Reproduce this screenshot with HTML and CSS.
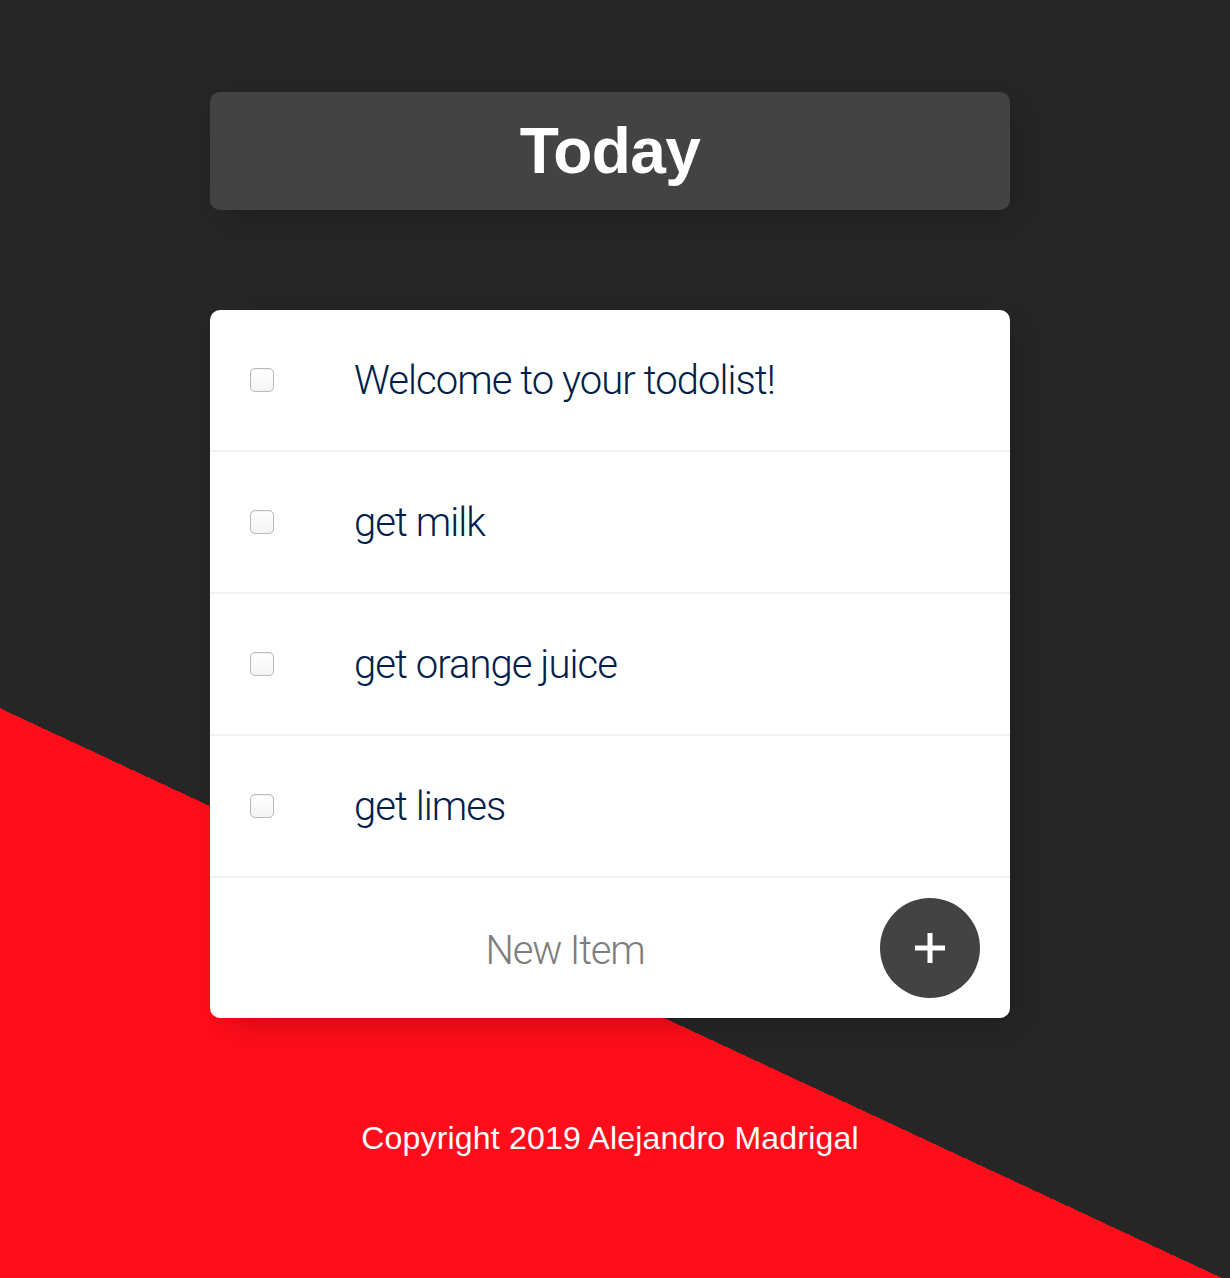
FILE: index.html
```html
<!DOCTYPE html>
<html lang="en">
<head>
<meta charset="utf-8">
<title>Today</title>
<link rel="stylesheet" href="styles.css">
</head>
<body>
<main class="page">
  <div class="box heading">
    <h1 class="title">Today</h1>
  </div>
  <div class="box list">
    <div class="item">
      <input type="checkbox" class="check">
      <p class="item-text">Welcome to your todolist!</p>
    </div>
    <div class="item">
      <input type="checkbox" class="check">
      <p class="item-text">get milk</p>
    </div>
    <div class="item">
      <input type="checkbox" class="check">
      <p class="item-text">get orange juice</p>
    </div>
    <div class="item">
      <input type="checkbox" class="check">
      <p class="item-text">get limes</p>
    </div>
    <form class="item new-item">
      <input type="text" class="new-input" placeholder="New Item" autocomplete="off">
      <button type="button" class="add-btn" aria-label="Add">
        <svg width="30" height="30" viewBox="0 0 30 30"><rect x="12.5" y="0" width="5" height="30" fill="#fff"/><rect x="0" y="12.5" width="30" height="5" fill="#fff"/></svg>
      </button>
    </form>
  </div>
  <footer class="footer">Copyright 2019 Alejandro Madrigal</footer>
</main>
</body>
</html>
```
FILE: styles.css
```css
html {
  background: linear-gradient(25deg, #ff0d1a 50%, #262626 50%) 0 0 / 1230px 1990px no-repeat, #262626;
  font-family: "Liberation Sans", Arial, sans-serif;
}

body {
  margin: 0;
}

.page {
  padding: 92px 10px 0 0;
  display: flex;
  flex-direction: column;
  align-items: center;
}

.box {
  width: 800px;
  border-radius: 10px;
  box-shadow: 10px 10px 30px -10px rgba(0, 0, 0, 0.3);
}

.heading {
  background: #434343;
  text-align: center;
  padding: 20px 0;
}

.title {
  margin: 0;
  font-size: 64px;
  line-height: 78px;
  font-weight: 700;
  color: #fff;
  letter-spacing: -0.6px;
}

.list {
  margin-top: 100px;
  background: #fff;
}

.item {
  min-height: 140px;
  display: flex;
  align-items: center;
  border-bottom: 2px solid #f1f1f1;
}

.item:last-child {
  border-bottom: 0;
}

.check {
  appearance: none;
  -webkit-appearance: none;
  margin: 0 40px;
  width: 24px;
  height: 24px;
  box-sizing: border-box;
  border: 1px solid #b9b9b9;
  border-radius: 5px;
  background: linear-gradient(#ffffff, #f4f4f4);
  box-shadow: inset 0 1px 1px rgba(0,0,0,0.05);
  flex: none;
}

.item-text {
  margin: 0;
  padding: 40px;
  font-family: Roboto, "Liberation Sans", sans-serif;
  font-size: 40px;
  font-weight: 300;
  letter-spacing: -0.95px;
  color: #00204a;
}

.new-item {
  margin: 0 0 0 40px;
}

.new-input {
  box-sizing: border-box;
  width: 630px;
  height: 120px;
  border: none;
  background: transparent;
  text-align: center;
  font-family: Roboto, "Liberation Sans", sans-serif;
  font-size: 40px;
  font-weight: 300;
  letter-spacing: -1.2px;
  color: #00204a;
  outline: none;
  padding: 4px 0 0;
}

.new-input::placeholder {
  color: #7d7d7d;
}

.add-btn {
  width: 100px;
  height: 100px;
  border-radius: 50%;
  border: 0;
  background: #434343;
  display: flex;
  align-items: center;
  justify-content: center;
  padding: 0;
  flex: none;
}

.add-btn svg {
  display: block;
}

.footer {
  margin-top: 102px;
  color: #fff;
  font-size: 32px;
  letter-spacing: 0.2px;
  text-align: center;
}
```
